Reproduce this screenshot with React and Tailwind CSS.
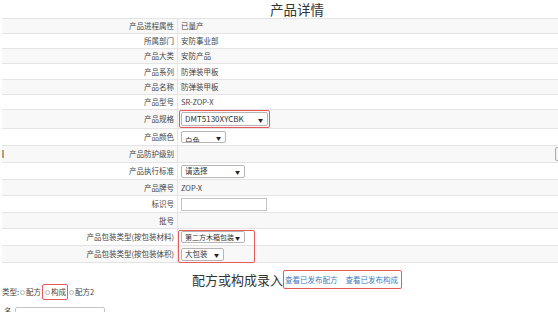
import React from 'react';

const font = { fontFamily: '"Noto Sans CJK SC", "Noto Sans", sans-serif' };

const Row = ({ label, gray, h, children, lead }) => (
  <div className={`flex border-b border-[#e4e4e4] ${gray ? 'bg-[#f8f8f8]' : 'bg-white'} ${h}`}>
    {lead}
    <div className={`${lead ? 'w-[174px]' : 'w-[176px]'} shrink-0 flex items-center justify-end pr-[3px] border-r border-[#e4e4e4] text-[7.5px] text-[#444] whitespace-nowrap`}>
      {label}
    </div>
    <div className="flex-1 flex items-center pl-[3px] text-[7.5px] text-[#444] whitespace-nowrap">{children}</div>
  </div>
);

const Select = ({ w, h = 'h-[14px]', text, size = 'text-[7.5px]', clip }) => (
  <div className={`${w} ${h} flex items-center justify-between border border-[#b5b5b5] rounded-[2px] bg-white pl-[3px] pr-[4px] overflow-hidden whitespace-nowrap`}>
    <span className={`${size} leading-none text-[#333] ${clip ? 'translate-y-[4px]' : ''}`}>{text}</span>
    <span className="text-[5px] leading-none text-[#222]">▼</span>
  </div>
);

const Radio = () => (
  <span className="inline-block w-[5px] h-[5px] rounded-full border border-[#bbb] bg-white mx-[1px]" />
);

export default function App() {
  return (
    <div className="w-[558px] h-[312px] overflow-hidden bg-white" style={font}>
      <div className="w-[594px]">
        {/* Title */}
        <div className="h-[18px] flex items-center justify-center text-[13.5px] leading-[18px] text-[#333]">
          产品详情
        </div>

        {/* Detail table */}
        <div className="relative ml-[2px] border-t border-[#e4e4e4]">
          <Row label="产品进程属性" gray h="h-[15px]">已量产</Row>
          <Row label="所属部门" h="h-[15px]">安防事业部</Row>
          <Row label="产品大类" gray h="h-[15px]">安防产品</Row>
          <Row label="产品系列" h="h-[16px]">防弹装甲板</Row>
          <Row label="产品名称" gray h="h-[15px]">防弹装甲板</Row>
          <Row label="产品型号" h="h-[15px]">SR-ZOP-X</Row>
          <Row label="产品规格" gray h="h-[19px]">
            <div className="border border-[#e8595b] rounded-[2px] px-[1px] py-[1px] -ml-[2px]">
              <Select w="w-[87px]" text="DMT5130XYCBK" size="text-[8px]" />
            </div>
          </Row>
          <Row label="产品颜色" h="h-[17px]">
            <Select w="w-[45px]" h="h-[12px]" text="白色" clip />
          </Row>
          <Row
            label="产品防护级别"
            gray
            h="h-[17px]"
            lead={<span className="w-[2px] h-[8px] self-center bg-[#c49a6c]" />}
          >
            <div className="ml-auto mr-[27px] w-[12px] h-[14px] border border-[#aaa] rounded-[2px] bg-[#f3f3f3] flex items-center justify-center">
              <span className="w-[6px] h-[7px] bg-[#b08a68] rounded-[1px]" />
            </div>
          </Row>
          <Row label="产品执行标准" h="h-[17px]">
            <Select w="w-[64px]" h="h-[13px]" text="请选择" />
          </Row>
          <Row label="产品牌号" gray h="h-[16px]">ZOP-X</Row>
          <Row label="标识号" h="h-[17px]">
            <div className="w-[86px] h-[13px] border border-[#c4c4c4] bg-white" />
          </Row>
          <Row label="批号" gray h="h-[16px]" />
          <Row label="产品包装类型(按包装材料)" h="h-[17px]">
            <Select w="w-[64px]" h="h-[12px]" text="第二方木箱包装" size="text-[7px]" />
          </Row>
          <Row label="产品包装类型(按包装体积)" gray h="h-[17px]">
            <Select w="w-[43px]" h="h-[13px]" text="大包装" />
          </Row>
          {/* highlight over the two packaging selects */}
          <div className="absolute left-[176px] top-[211px] w-[77px] h-[33px] border border-[#e8595b] rounded-[2px] pointer-events-none" />
        </div>

        {/* Formula section */}
        <div className="mt-[6px] h-[21px] flex items-center justify-center">
          <span className="text-[13px] leading-[17px] text-[#333]">配方或构成录入</span>
          <div className="flex items-center h-[19px] border border-[#e8595b] rounded-[2px] pl-[1px] pr-[3px] gap-[8px] text-[7.5px] text-[#3b7dc4] whitespace-nowrap">
            <a href="#">查看已发布配方</a>
            <a href="#">查看已发布构成</a>
          </div>
        </div>

        <div className="-mt-[6px] h-[16px] flex items-center pl-[2px] text-[7.5px] text-[#444] whitespace-nowrap">
          <span>类型:</span>
          <Radio />
          <span>配方</span>
          <span className="flex items-center h-[16px] border border-[#e8595b] rounded-[2px] px-[1px] ml-[1px]">
            <Radio />
            构成
          </span>
          <Radio />
          <span>配方2</span>
        </div>

        <div className="mt-[7px] flex items-start">
          <span className="w-[15px] pl-[4px] text-[7.5px] text-[#444] leading-[8px]">名</span>
          <div className="w-[90px] h-[14px] border border-[#c4c4c4] rounded-[2px] bg-white" />
        </div>
      </div>
    </div>
  );
}
